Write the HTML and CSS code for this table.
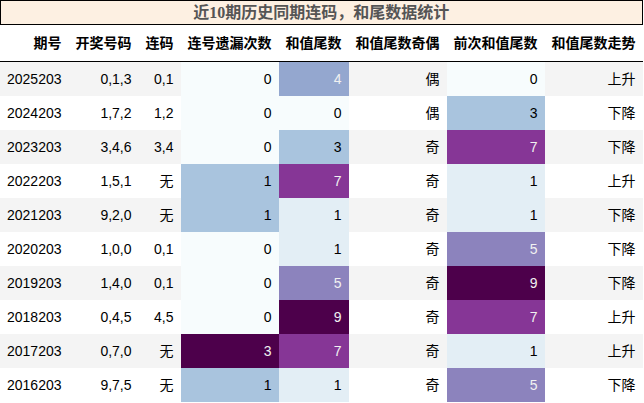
FILE: index.html
```html
<!DOCTYPE html>
<html>
<head>
<meta charset="utf-8">
<link rel="stylesheet" href="styles.css">
</head>
<body>
<table class="stats">
  <caption>近10期历史同期连码，和尾数据统计</caption>
  <thead>
    <tr>
      <th>期号</th><th>开奖号码</th><th>连码</th><th>连号遗漏次数</th><th>和值尾数</th><th>和值尾数奇偶</th><th>前次和值尾数</th><th>和值尾数走势</th>
    </tr>
  </thead>
  <tbody>
    <tr><td>2025203</td><td>0,1,3</td><td>0,1</td><td class="g0">0</td><td class="g4">4</td><td>偶</td><td class="g0">0</td><td>上升</td></tr>
    <tr><td>2024203</td><td>1,7,2</td><td>1,2</td><td class="g0">0</td><td class="g0">0</td><td>偶</td><td class="g3">3</td><td>下降</td></tr>
    <tr><td>2023203</td><td>3,4,6</td><td>3,4</td><td class="g0">0</td><td class="g3">3</td><td>奇</td><td class="g7">7</td><td>下降</td></tr>
    <tr><td>2022203</td><td>1,5,1</td><td>无</td><td class="g3">1</td><td class="g7">7</td><td>奇</td><td class="g1">1</td><td>上升</td></tr>
    <tr><td>2021203</td><td>9,2,0</td><td>无</td><td class="g3">1</td><td class="g1">1</td><td>奇</td><td class="g1">1</td><td>下降</td></tr>
    <tr><td>2020203</td><td>1,0,0</td><td>0,1</td><td class="g0">0</td><td class="g1">1</td><td>奇</td><td class="g5">5</td><td>下降</td></tr>
    <tr><td>2019203</td><td>1,4,0</td><td>0,1</td><td class="g0">0</td><td class="g5">5</td><td>奇</td><td class="g9">9</td><td>下降</td></tr>
    <tr><td>2018203</td><td>0,4,5</td><td>4,5</td><td class="g0">0</td><td class="g9">9</td><td>奇</td><td class="g7">7</td><td>上升</td></tr>
    <tr><td>2017203</td><td>0,7,0</td><td>无</td><td class="g9">3</td><td class="g7">7</td><td>奇</td><td class="g1">1</td><td>上升</td></tr>
    <tr><td>2016203</td><td>9,7,5</td><td>无</td><td class="g3">1</td><td class="g1">1</td><td>奇</td><td class="g5">5</td><td>下降</td></tr>
  </tbody>
</table>
</body>
</html>
```
FILE: styles.css
```css
html, body {
  margin: 0;
  padding: 0;
  background: #ffffff;
}
.stats {
  border-collapse: collapse;
  border-spacing: 0;
  font-family: "Liberation Sans", "Noto Sans CJK SC", sans-serif;
  font-size: 14px;
  color: #000000;
}
.stats caption {
  box-sizing: border-box;
  height: 25px;
  border: 1px solid #000000;
  background: #fdf0e2;
  color: #555555;
  font-family: "Liberation Serif", "Noto Sans CJK SC", serif;
  font-weight: bold;
  font-size: 16px;
  line-height: 23px;
  text-align: center;
}
.stats th {
  font-weight: bold;
  text-align: right;
  padding: 8px 7px;
  line-height: 20px;
  white-space: nowrap;
  border-bottom: 1px solid #000000;
  background: #ffffff;
}
.stats td {
  text-align: right;
  padding: 7px 7px;
  line-height: 20px;
  white-space: nowrap;
}
.stats td:first-child {
  text-align: left;
}
.stats tbody tr:nth-child(odd) {
  background: #f4f4f4;
}
.stats tbody tr:nth-child(even) {
  background: #ffffff;
}
.stats td.g0 { background: #f7fcfd; color: #000000; }
.stats td.g1 { background: #e3eef5; color: #000000; }
.stats td.g3 { background: #a9c4de; color: #000000; }
.stats td.g4 { background: #94a7cf; color: #f1f1f1; }
.stats td.g5 { background: #8c83bd; color: #f1f1f1; }
.stats td.g7 { background: #863696; color: #f1f1f1; }
.stats td.g9 { background: #4d004b; color: #f1f1f1; }
```
